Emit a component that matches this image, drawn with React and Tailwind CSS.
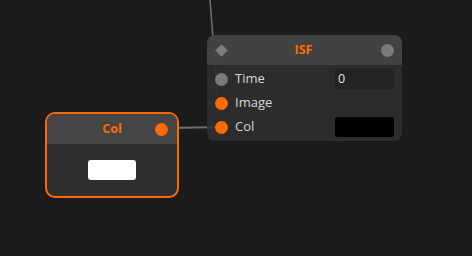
import React from 'react';

const font = { fontFamily: '"Open Sans", "DejaVu Sans", sans-serif' };

function Port({ orange, className = '' }) {
  return (
    <span
      className={`block h-[13px] w-[13px] rounded-full ${orange ? 'bg-[#ff6a00]' : 'bg-[#7a7a7a]'} ${className}`}
    />
  );
}

function IsfNode() {
  return (
    <div className="absolute left-[207px] top-[35px] w-[195px] h-[106px] rounded-[8px] overflow-hidden bg-[#2f2f2f]/90">
      <div className="h-[30px] bg-[#454545]/90 flex items-center px-[9px]">
        <span className="block h-[9px] w-[9px] rotate-45 bg-[#7c7c7c] ml-[1px]" />
        <span className="flex-1 text-center text-[12.5px] font-bold text-[#ff6a00]">ISF</span>
        <span className="block h-[13px] w-[13px] rounded-full bg-[#7a7a7a] mr-[-1px]" />
      </div>
      <div className="flex flex-col pl-[8px] pr-[8px] pt-[4px] gap-[4px]">
        <div className="flex items-center h-[20px]">
          <Port />
          <span className="ml-[7px] text-[13px] text-[#d6d6d6]">Time</span>
          <div className="ml-auto w-[59px] h-[20px] rounded-[3px] bg-[#232323] flex items-center px-[3px] text-[12.5px] text-[#e0e0e0]">0</div>
        </div>
        <div className="flex items-center h-[20px]">
          <Port orange />
          <span className="ml-[7px] text-[13px] text-[#d6d6d6]">Image</span>
        </div>
        <div className="flex items-center h-[20px]">
          <Port orange />
          <span className="ml-[7px] text-[13px] text-[#d6d6d6]">Col</span>
          <div className="ml-auto w-[59px] h-[20px] rounded-[3px] bg-black" />
        </div>
      </div>
    </div>
  );
}

function ColNode() {
  return (
    <div className="absolute left-[45px] top-[112px] w-[134px] h-[86px] rounded-[10px] border-2 border-[#ff6a00] overflow-hidden bg-[#2f2f2f]">
      <div className="h-[30px] bg-[#454545] flex items-center relative">
        <span className="flex-1 text-center text-[12.5px] font-bold text-[#ff6a00]">Col</span>
        <Port orange className="absolute right-[9px] top-[9px]" />
      </div>
      <div className="flex justify-center pt-[16px]">
        <div className="w-[48px] h-[20px] rounded-[3px] bg-white" />
      </div>
    </div>
  );
}

export default function App() {
  return (
    <div className="relative w-[472px] h-[256px] bg-[#1b1b1b] overflow-hidden" style={font}>
      <svg className="absolute inset-0" width="472" height="256">
        <line x1="210" y1="0" x2="218" y2="102" stroke="#6e6e6e" strokeWidth="1.6" />
        <line x1="170" y1="128" x2="221" y2="127" stroke="#6e6e6e" strokeWidth="2" />
      </svg>
      <IsfNode />
      <ColNode />
    </div>
  );
}
